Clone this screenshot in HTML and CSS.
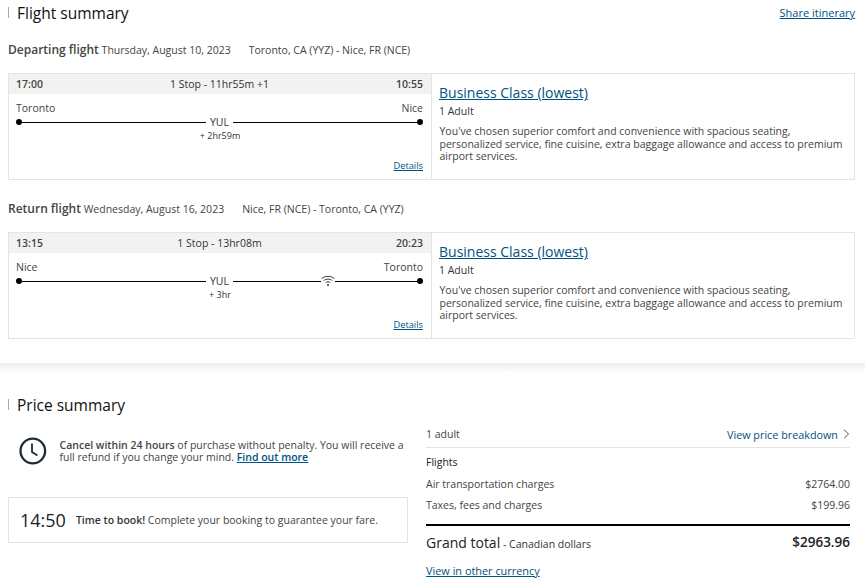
FILE: index.html
```html
<!DOCTYPE html>
<html lang="en">
<head>
<meta charset="utf-8">
<title>Flight summary</title>
<link rel="stylesheet" href="styles.css">
</head>
<body>
<section class="flights">
  <header class="title-row">
    <h2 class="title">Flight summary</h2>
    <a class="link share" href="#">Share itinerary</a>
  </header>

  <h3 class="leg-head"><b>Departing flight</b> <span>Thursday, August 10, 2023</span><span class="route">Toronto, CA (YYZ) - Nice, FR (NCE)</span></h3>
  <article class="card">
    <div class="itin">
      <div class="times"><span class="t">17:00</span><span class="dur">1 Stop - 11hr55m +1</span><span class="t">10:55</span></div>
      <div class="cities"><span>Toronto</span><span>Nice</span></div>
      <div class="line">
        <div class="half"><i class="dot"></i><i class="seg"></i></div>
        <span class="stop">YUL</span>
        <div class="half"><i class="seg"></i><i class="dot"></i></div>
      </div>
      <div class="layover">+ 2hr59m</div>
      <div class="details"><a class="link" href="#">Details</a></div>
    </div>
    <div class="fare">
      <a class="fare-name" href="#">Business Class (lowest)</a>
      <div class="pax">1 Adult</div>
      <p class="desc">You've chosen superior comfort and convenience with spacious seating, personalized service, fine cuisine, extra baggage allowance and access to premium airport services.</p>
    </div>
  </article>

  <h3 class="leg-head second"><b>Return flight</b> <span>Wednesday, August 16, 2023</span><span class="route">Nice, FR (NCE) - Toronto, CA (YYZ)</span></h3>
  <article class="card">
    <div class="itin">
      <div class="times"><span class="t">13:15</span><span class="dur">1 Stop - 13hr08m</span><span class="t">20:23</span></div>
      <div class="cities"><span>Nice</span><span>Toronto</span></div>
      <div class="line">
        <div class="half"><i class="dot"></i><i class="seg"></i></div>
        <span class="stop">YUL</span>
        <div class="half"><i class="seg seg-wifi"></i>
          <svg class="wifi" width="14" height="12" viewBox="0 0 14 12" fill="none" stroke="#333" stroke-width="1"><path d="M.7 3.6C4.2.6 9.8.6 13.3 3.6"/><path d="M2.6 5.6c2.6-2 6.2-2 8.8 0"/><path d="M4.6 7.6c1.4-1 3.4-1 4.8 0"/><circle cx="7" cy="10" r="1" fill="#333" stroke="none"/></svg>
          <i class="seg"></i><i class="dot"></i></div>
      </div>
      <div class="layover">+ 3hr</div>
      <div class="details"><a class="link" href="#">Details</a></div>
    </div>
    <div class="fare">
      <a class="fare-name" href="#">Business Class (lowest)</a>
      <div class="pax">1 Adult</div>
      <p class="desc">You've chosen superior comfort and convenience with spacious seating, personalized service, fine cuisine, extra baggage allowance and access to premium airport services.</p>
    </div>
  </article>
</section>

<section class="price">
  <h2 class="title">Price summary</h2>
  <div class="price-grid">
    <div class="price-left">
      <div class="cancel">
        <svg class="clock" width="28" height="28" viewBox="0 0 28 28" fill="none" stroke="#1c2b36" stroke-width="2.3"><circle cx="13.8" cy="14" r="12.3"/><path d="M13 6.5v8.5l5.5 3.5" stroke-width="1.8"/></svg>
        <p><b>Cancel within 24 hours</b> of purchase without penalty. You will receive a full refund if you change your mind. <a class="link strong" href="#">Find out more</a></p>
      </div>
      <div class="timer"><span class="clock-num">14:50</span><span class="timer-text"><b>Time to book!</b> Complete your booking to guarantee your fare.</span></div>
    </div>
    <div class="price-right">
      <div class="row adult"><span>1 adult</span><span class="breakdown">View price breakdown
        <svg width="7" height="10" viewBox="0 0 7 10" fill="none" stroke="#555" stroke-width="1"><path d="M1 .7 5.6 5 1 9.3"/></svg></span></div>
      <div class="flights-label">Flights</div>
      <div class="row charge"><span>Air transportation charges</span><span>$2764.00</span></div>
      <div class="row charge"><span>Taxes, fees and charges</span><span>$199.96</span></div>
      <div class="row total"><span><b>Grand total</b><small> - Canadian dollars</small></span><b class="amount">$2963.96</b></div>
      <a class="link currency" href="#">View in other currency</a>
    </div>
  </div>
</section>
</body>
</html>
```

FILE: styles.css
```css
* { box-sizing: border-box; }
html, body { margin: 0; padding: 0; }
body {
  width: 865px;
  height: 585px;
  overflow: hidden;
  background: #fff;
  color: #333;
  font-family: "Open Sans", sans-serif;
  font-size: 10px;
}
h2, h3, p { margin: 0; font-weight: 400; }
a { color: #00527f; }
.link { color: #00527f; text-decoration: underline; }

.flights { padding: 0 10px 0 8px; height: 362px; }
.title-row { display: flex; justify-content: space-between; align-items: center; height: 24px; margin-top: 1px; }
.title {
  font-size: 15.5px;
  font-weight: 500;
  line-height: 20px;
  color: #111;
  padding-left: 9px;
  position: relative;
}
.title::before {
  content: "";
  position: absolute;
  left: 0; top: 4px;
  width: 1px; height: 11px;
  background: #b7a793;
}
.share { font-size: 11px; font-weight: 400; margin-bottom: 2px; }

.leg-head { font-size: 10.5px; line-height: 16px; margin-top: 17px; height: 16px; white-space: nowrap; }
.leg-head b { font-size: 12px; font-weight: 600; color: #444; }
.leg-head span { color: #444; }
.leg-head .route { margin-left: 18px; }
.leg-head.second { margin-top: 21px; }

.card { display: flex; margin-top: 15px; height: 107px; border: 1px solid #e4e4e4; }
.itin { width: 423px; flex: none; display: flex; flex-direction: column; border-right: 1px solid #e4e4e4; }
.times {
  display: flex; justify-content: space-between;
  height: 20px; padding: 0 8px 0 7px;
  background: #f2f2f2;
  font-size: 10.5px; line-height: 20px; color: #333;
}
.t { font-weight: 600; color: #444; }
.dur { font-weight: 400; }
.cities { display: flex; justify-content: space-between; padding: 7px 8px 0 7px; font-size: 10.5px; line-height: 14px; color: #444; }
.line { display: grid; grid-template-columns: 1fr auto 1fr; align-items: center; padding: 0 8px 0 7px; height: 14px; }
.half { display: flex; align-items: center; min-width: 0; }
.dot { width: 6px; height: 6px; border-radius: 50%; background: #000; flex: none; }
.seg { height: 1px; background: #000; flex: 1; }
.seg-wifi { flex: none; width: 88px; }
.wifi { flex: none; }
.stop { padding: 0 4px; font-size: 10.5px; color: #333; line-height: 14px; }
.layover { text-align: center; font-size: 9px; line-height: 12px; color: #333; margin-top: 1px; }
.details { margin-top: auto; padding: 0 8px 7px 0; text-align: right; font-size: 9.3px; line-height: 13px; }

.fare { flex: 1; padding: 9px 7px 0 7px; }
.fare-name { display: block; font-size: 14px; line-height: 20px; }
.pax { font-size: 10.5px; line-height: 15px; margin-top: 1px; color: #333; }
.desc { font-size: 10.5px; line-height: 12.5px; margin-top: 6px; padding-left: .5px; color: #444; }

.price {
  height: 223px;
  padding: 32px 10px 0 8px;
  background: linear-gradient(#eee, #fff 10px);
  background-repeat: no-repeat;
}
.price-grid { display: flex; justify-content: space-between; margin-top: -4px; }
.price-left { width: 400px; }
.cancel { display: flex; align-items: center; gap: 12.5px; padding: 26px 0 0 11px; }
.cancel p { font-size: 10.5px; line-height: 12.5px; color: #444; }
.cancel b { font-weight: 600; }
.clock { flex: none; }
.strong { font-weight: 600; }
.timer { display: flex; align-items: center; gap: 10px; height: 46px; margin-top: 32px; border: 1px solid #e4e4e4; padding-left: 11px; }
.clock-num { font-size: 18px; font-weight: 500; color: #222; }
.timer-text { font-size: 10.5px; color: #444; }
.timer-text b { font-weight: 600; color: #333; }

.price-right { width: 424px; margin-right: 5px; padding-top: 13px; }
.row { display: flex; justify-content: space-between; align-items: center; }
.adult { height: 24px; padding-bottom: 3px; font-size: 10.5px; border-bottom: 1px solid #e4e4e4; color: #444; }
.breakdown { color: #00527f; display: flex; align-items: center; gap: 5px; font-size: 10.8px; }
.flights-label { font-size: 10.5px; font-weight: 500; color: #222; margin-top: 7px; line-height: 14px; }
.charge { font-size: 10.5px; height: 21px; color: #444; }
.flights-label + .charge { margin-top: 4px; }
.total { height: 33px; margin-top: 9px; border-top: 2px solid #000; font-size: 10.5px; color: #333; padding-top: 1px; }
.total b { font-size: 14px; font-weight: 500; color: #222; }
.total small { font-size: 10.5px; }
.total .amount { font-size: 13.5px; font-weight: 600; }
.currency { display: block; font-size: 10.9px; margin-top: 6px; }
```
